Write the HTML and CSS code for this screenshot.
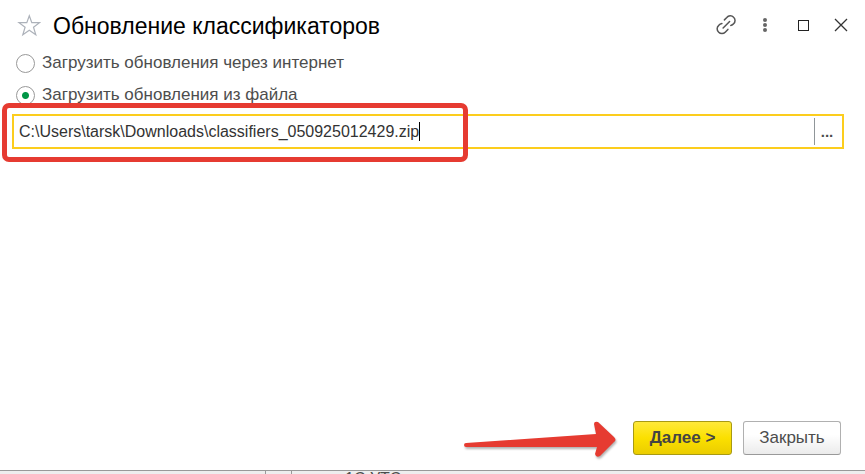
FILE: index.html
```
<!DOCTYPE html>
<html lang="ru">
<head>
  <meta charset="UTF-8">
  <meta name="viewport" content="width=device-width, initial-scale=1.0">
  <title>Обновление классификаторов</title>
  <link rel="stylesheet" href="styles.css">
</head>
<body>

  <main class="window">
    <header class="titlebar">
      <button class="icon-button" type="button" aria-label="Добавить в избранное">
        <svg width="24" height="24" viewBox="0 0 24 24" fill="none" stroke="#adb2ba" stroke-width="1.2">
          <path d="M12.3 1.8L14.8 8.7H22.5L16.5 13.2L18.8 20.7L12.3 16.2L5.8 20.7L8.1 13.2L2 8.7H9.8Z"/>
        </svg>
      </button>
      <h1 class="title">Обновление классификаторов</h1>
      <div class="tools">
        <button class="icon-button" type="button" aria-label="Ссылка">
          <svg width="24" height="24" viewBox="0 0 24 24" fill="none" stroke="#555" stroke-width="1.5" stroke-linecap="round">
            <path d="M9.4 5.9L11.8 3.5A4.5 4.5 0 0 1 18.6 3.2A4.5 4.5 0 0 1 18.6 9.8Q17.6 11.1 15.8 11.4"/>
            <path d="M6.9 9.5Q5 9.8 3.8 11.3A4.5 4.5 0 0 0 3.7 18.2A4.5 4.5 0 0 0 10.2 18.2L12.9 15.4"/>
            <path d="M8.1 14L14.6 7.5"/>
          </svg>
        </button>
        <button class="icon-button" type="button" aria-label="Ещё">
          <svg width="24" height="24" viewBox="0 0 24 24" fill="#666">
            <circle cx="12" cy="6" r="2"/>
            <circle cx="12" cy="11" r="2"/>
            <circle cx="12" cy="16" r="2"/>
          </svg>
        </button>
        <button class="icon-button" type="button" aria-label="Развернуть">
          <svg width="24" height="24" viewBox="0 0 24 24" fill="none" stroke="#222">
            <rect x="7.5" y="6.5" width="10" height="10"/>
          </svg>
        </button>
        <button class="icon-button" type="button" aria-label="Закрыть окно">
          <svg width="24" height="24" viewBox="0 0 24 24" fill="none" stroke="#333" stroke-width="1.3">
            <path d="M6 5L18 17M18 5L6 17"/>
          </svg>
        </button>
      </div>
    </header>

    <form class="form">
      <label class="option"><input class="radio" type="radio" name="source">Загрузить обновления через интернет</label>
      <label class="option"><input class="radio" type="radio" name="source" checked>Загрузить обновления из файла</label>

      <div class="field">
        <label class="path">
          <input class="path-input" type="text" aria-label="Файл обновления" value="C:\Users\tarsk\Downloads\classifiers_050925012429.zip">
          <span class="caret"></span>
        </label>
        <button class="browse" type="button" aria-label="Выбрать файл">...</button>
        <div class="highlight"></div>
      </div>
    </form>

    <footer class="footer">
      <svg class="arrow" width="160" height="40" viewBox="0 0 160 40">
        <path fill="#e63b31" d="M4 25L134 16L132 6Q132 3 136 4L152 19Q155 22 152 24L138 38Q134 40 133 36L135 29H4Q2 29 2 27Q2 25 4 25Z"/>
      </svg>
      <button class="button primary" type="button">Далее &gt;</button>
      <button class="button" type="button">Закрыть</button>
    </footer>
  </main>

  <!-- edge of the window underneath -->
  <div class="backdrop">
    <div class="backdrop-cell"></div>
    <div class="backdrop-text">1С УТС</div>
  </div>

</body>
</html>
```
FILE: styles.css
```
* {
  box-sizing: border-box;
}
body {
  margin: 0;
  height: 100vh;
  display: flex;
  flex-direction: column;
  overflow: hidden;
  font-family: "Liberation Sans", Arial, sans-serif;
  font-size: 17px;
  color: #4d4d4d;
  background-color: #fff;
}
button, input {
  font: inherit;
  color: inherit;
}
.window {
  flex: 1;
  display: flex;
  flex-direction: column;
  border-bottom: 1px solid #999;
}
.titlebar {
  display: flex;
  align-items: center;
  padding: 12px 12px 0 17px;
}
.icon-button {
  display: flex;
  padding: 0;
  border: none;
  background: none;
}
.title {
  flex: 1;
  margin: 0 0 0 12px;
  font-size: 23px;
  line-height: 28px;
  font-weight: normal;
  color: #000;
}
.tools {
  display: flex;
  gap: 14px;
}
.form {
  flex: 1;
  padding: 7px 21px 0 12px;
}
.option {
  display: flex;
  align-items: center;
  gap: 7px;
  height: 32px;
  padding-left: 4px;
}
.radio {
  appearance: none;
  width: 19px;
  height: 19px;
  margin: 0;
  border: 1px solid #999;
  border-radius: 50%;
}
.radio:checked {
  background: radial-gradient(circle, #009646 3px, #fff 4px);
}
.field {
  position: relative;
  display: flex;
  height: 35px;
  margin-top: 3px;
  border: 2px solid #fccd1d;
}
.path {
  flex: 1;
  display: flex;
  align-items: center;
  padding-left: 5px;
  font-size: 16px;
  color: #333;
}
.path-input {
  field-sizing: content;
  padding: 0;
  border: none;
  outline: none;
  background: none;
}
.caret {
  width: 1px;
  height: 19px;
  background-color: #000;
}
.browse {
  width: 28px;
  margin: 2px 0;
  padding: 0 3px 0 0;
  border: none;
  border-left: 1px solid #909699;
  background: none;
  font-size: 15px;
  font-weight: bold;
}
.highlight {
  position: absolute;
  top: -13px;
  left: -12px;
  width: 466px;
  height: 59px;
  border: 5px solid #e63b31;
  border-radius: 7px;
  pointer-events: none;
}
.footer {
  display: flex;
  justify-content: flex-end;
  align-items: center;
  gap: 11px;
  padding: 0 24px 12px 0;
}
.arrow {
  overflow: visible;
  filter: drop-shadow(1px 2px 1px rgba(0, 0, 0, 0.3));
}
.button {
  width: 98px;
  height: 34px;
  padding: 0;
  border: 1px solid #b0b0b0;
  border-bottom-color: #999;
  border-radius: 3px;
  background: linear-gradient(#fff 40%, #ebebeb);
}
.primary {
  width: 99px;
  border-color: #a89a13;
  background: linear-gradient(#ffe93a, #fbe000 50%, #ebcd00);
  font-weight: bold;
  color: #444;
}
.backdrop {
  display: flex;
  height: 3px;
  overflow: hidden;
  background-color: #eee;
}
.backdrop-cell {
  width: 27px;
  margin-left: 265px;
  border: solid #999;
  border-width: 0 1px;
}
.backdrop-text {
  margin-left: 53px;
  font-size: 16px;
  line-height: 16px;
}
```
